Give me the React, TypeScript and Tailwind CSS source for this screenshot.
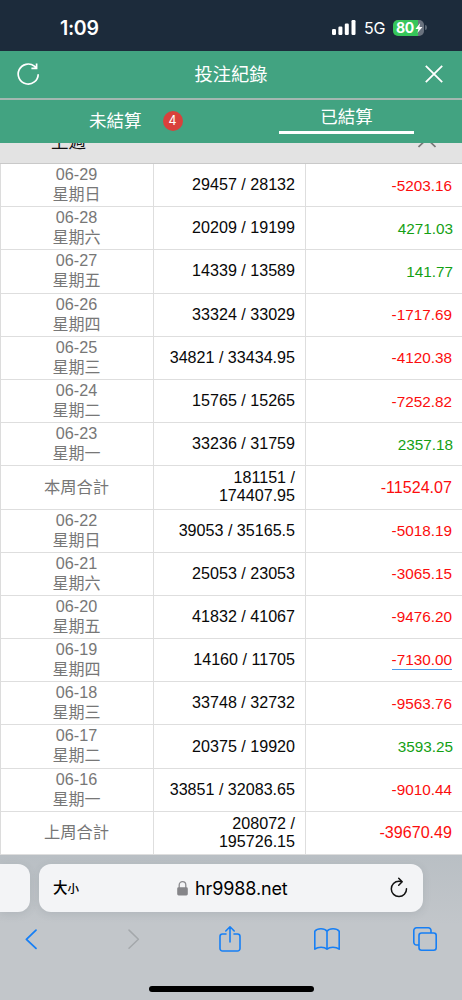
import React from 'react';

type Row = { date?: string; label: string; bet: string; amount: string; underlined?: boolean };

const rows: Row[] = [
  { date: '06-29', label: '星期日', bet: '29457 / 28132', amount: '-5203.16' },
  { date: '06-28', label: '星期六', bet: '20209 / 19199', amount: '4271.03' },
  { date: '06-27', label: '星期五', bet: '14339 / 13589', amount: '141.77' },
  { date: '06-26', label: '星期四', bet: '33324 / 33029', amount: '-1717.69' },
  { date: '06-25', label: '星期三', bet: '34821 / 33434.95', amount: '-4120.38' },
  { date: '06-24', label: '星期二', bet: '15765 / 15265', amount: '-7252.82' },
  { date: '06-23', label: '星期一', bet: '33236 / 31759', amount: '2357.18' },
  { label: '本周合計', bet: '181151 / 174407.95', amount: '-11524.07' },
  { date: '06-22', label: '星期日', bet: '39053 / 35165.5', amount: '-5018.19' },
  { date: '06-21', label: '星期六', bet: '25053 / 23053', amount: '-3065.15' },
  { date: '06-20', label: '星期五', bet: '41832 / 41067', amount: '-9476.20' },
  { date: '06-19', label: '星期四', bet: '14160 / 11705', amount: '-7130.00', underlined: true },
  { date: '06-18', label: '星期三', bet: '33748 / 32732', amount: '-9563.76' },
  { date: '06-17', label: '星期二', bet: '20375 / 19920', amount: '3593.25' },
  { date: '06-16', label: '星期一', bet: '33851 / 32083.65', amount: '-9010.44' },
  { label: '上周合計', bet: '208072 / 195726.15', amount: '-39670.49' },
];

function StatusBar() {
  return (
    <div className="flex h-[51px] shrink-0 items-start justify-between bg-[#1c2b3b] font-['Inter','Liberation_Sans',sans-serif] text-white">
      <span className="ml-[60px] mt-[16px] text-[19.5px] font-semibold leading-[24px] tracking-[-0.3px]">1:09</span>
      <div className="mr-[35px] mt-[19px] flex h-[17px] items-center">
        <svg width="24" height="15" viewBox="0 0 24 15" fill="white" className="mr-[8px]">
          <rect x="0" y="9" width="4" height="6" rx="1.2" />
          <rect x="6.4" y="6.5" width="4" height="8.5" rx="1.2" />
          <rect x="12.8" y="3.5" width="4" height="11.5" rx="1.2" />
          <rect x="19.5" y="0" width="4" height="15" rx="1.2" />
        </svg>
        <span className="mr-[8px] w-[21px] pt-[2px] text-[16px] leading-[17px] tracking-[-0.2px]">5G</span>
        <div className="flex h-[16px] w-[31px] items-center overflow-hidden rounded-[5px] bg-[linear-gradient(90deg,#36c65a_82%,#69727e_82%)] pl-[3px]">
          <span className="text-[14px] font-bold leading-[16px] tracking-[-0.3px]">80</span>
          <svg width="8" height="12" viewBox="0 0 9 12" className="ml-px shrink-0">
            <path d="M5.8 0.5 0.5 7h3.3L2.7 11.5 8.4 5H5L5.8 0.5z" fill="white" />
          </svg>
        </div>
        <span className="ml-px h-[5px] w-[2px] rounded-r-full bg-[#5a6672]" />
      </div>
    </div>
  );
}

function Header() {
  return (
    <header className="grid h-[47px] shrink-0 grid-cols-[1fr_auto_1fr] items-center bg-[#42a381] text-white">
      <svg width="24" height="24" viewBox="0 0 24 24" fill="none" stroke="white" strokeWidth="1.7" className="mb-[2px] ml-[17px]">
        <path d="M21.2 12.2A10 10 0 1 1 17.4 4.2L20 6.3M14.4 6.3h5.2V1.4" />
      </svg>
      <h1 className="text-[18.3px] leading-[24px]">投注紀錄</h1>
      <svg width="20" height="20" viewBox="0 0 20 20" fill="none" stroke="white" strokeWidth="1.8" className="mb-px mr-[18px] justify-self-end">
        <path d="m1.8 1.8 16.4 16.4M18.2 1.8 1.8 18.2" />
      </svg>
    </header>
  );
}

function Tabs() {
  return (
    <nav className="flex h-[45px] shrink-0 border-t-2 border-[#a3b8b1] bg-[#42a381] text-[17.5px] text-white">
      <div className="flex w-[231px] items-center pb-[2px] pl-[89px]">
        <span className="leading-[24px]">未結算</span>
        <span className="ml-[21px] flex size-[20px] items-center justify-center rounded-full bg-[#d9413c] pt-px font-['Inter',sans-serif] text-[12.5px] leading-none">4</span>
      </div>
      <div className="flex w-[231px] flex-col items-center">
        <span className="mt-[5px] leading-[24px]">已結算</span>
        <span className="mt-[2px] h-[3px] w-[135px] bg-white" />
      </div>
    </nav>
  );
}

function SectionBar() {
  return (
    <div className="flex h-[21px] shrink-0 items-end overflow-hidden border-b border-[#c9c9c9] bg-[#e3e3e3] text-[17.5px] leading-[26px] text-[#111]">
      <span className="mb-[8px] ml-[51px]">上週</span>
      <svg width="18" height="12" viewBox="0 0 18 12" fill="none" stroke="#777" strokeWidth="1.7" className="mb-[15px] ml-auto mr-[26px]">
        <path d="m0.5 11 8.5-8.2 8.5 8.2" />
      </svg>
    </div>
  );
}

function RecordTable() {
  return (
    <main className="flex h-[691px] shrink-0 flex-col border-l border-[#dcdcdc] bg-white">
      {rows.map((row) => (
        <div key={row.date ?? row.label} className="grid min-h-0 flex-1 grid-cols-[152px_152px_1fr] border-b border-[#dedede]">
          <div className={`flex flex-col items-center pr-[1px] text-[#777] ${row.date ? 'text-[16px]' : 'justify-center pb-px text-[16.3px]'}`}>
            {row.date && <span className="pt-px text-[16.2px] leading-[18px]">{row.date}</span>}
            <span className={row.date ? 'leading-[23px]' : 'leading-[24px]'}>{row.label}</span>
          </div>
          <div className="flex items-center justify-end border-l border-[#dedede] pb-[2px] pl-[10px] pr-[10px] text-right text-[16.1px] leading-[18px] text-[#080808]">
            <span className={row.date ? 'whitespace-nowrap' : 'w-[90px]'}>{row.bet}</span>
          </div>
          <div className={`flex items-center justify-end border-l border-[#dedede] ${row.amount.startsWith('-') ? 'pr-[10px] text-[#fc0d0d]' : 'pr-[9px] text-[#14a014]'} ${row.date ? 'pt-px text-[15.3px]' : 'pb-px text-[16.1px]'}`}>
            <span className={`leading-[18px] ${row.underlined ? 'border-b border-[#4c9ceb]' : ''}`}>{row.amount}</span>
          </div>
        </div>
      ))}
    </main>
  );
}

function BrowserBar() {
  return (
    <footer className="flex min-h-0 flex-1 flex-col bg-[linear-gradient(180deg,#b9bfc4,#c2c6ca_70px)]">
      <div className="mt-[9px] flex h-[48px] shrink-0 gap-[9px] text-black">
        <div className="w-[30px] rounded-r-[12px] bg-[#f3f4f6] shadow-[0_2px_8px_rgba(60,70,80,0.12)]" />
        <div className="flex w-[384px] items-center rounded-[12px] bg-[#f3f4f6] shadow-[0_2px_8px_rgba(60,70,80,0.12)]">
          <div className="ml-[14px] flex w-[124px] items-baseline font-medium leading-[24px]">
            <span className="text-[14.5px]">大</span><span className="text-[11.5px]">小</span>
          </div>
          <svg width="11" height="15" viewBox="0 0 11 15" fill="none">
            <path d="M2.2 7V4a3.3 3.3 0 0 1 6.6 0v3" stroke="#8b8b8f" strokeWidth="1.3" />
            <rect x="0.2" y="6.3" width="10.6" height="8.2" rx="1.4" fill="#858589" />
          </svg>
          <span className="ml-[7px] mt-px font-['Inter',sans-serif] text-[18px] leading-[24px] tracking-[-0.12px]">hr9988.net</span>
          <svg width="18" height="21" viewBox="0 0 18 21" fill="none" stroke="#111" strokeWidth="1.5" strokeLinecap="round" strokeLinejoin="round" className="mb-[2px] ml-auto mr-[15px]">
            <path d="M16.5 11.7A7.6 7.6 0 1 1 8.9 4.3c1.2 0 2 .1 3 .4M8.7 1.2l3.5 3.6-3.5 3.4" />
          </svg>
        </div>
      </div>
      <div className="mt-[12px] flex h-[30px] shrink-0 items-center justify-between px-[24px] text-[#167ff5]">
        <svg width="14" height="22" viewBox="0 0 14 22" fill="none" stroke="currentColor" strokeWidth="1.8" strokeLinecap="round" strokeLinejoin="round"><path d="m12 2.1-9.6 9.2L12 20.3" /></svg>
        <svg width="14" height="22" viewBox="0 0 14 22" fill="none" stroke="#a4a8ab" strokeWidth="1.5" strokeLinecap="round" strokeLinejoin="round" className="ml-[18px]"><path d="m2 2.1 9.4 9.2L2 20.3" /></svg>
        <svg width="24" height="29" viewBox="0 0 24 29" fill="none" stroke="currentColor" strokeWidth="1.6" strokeLinecap="round" strokeLinejoin="round" className="ml-[6px]">
          <path d="M8 9H4.5A2.5 2.5 0 0 0 2 11.5v12A2.5 2.5 0 0 0 4.5 26h15a2.5 2.5 0 0 0 2.5-2.5v-12A2.5 2.5 0 0 0 19.5 9H16M12 17V1.8M7.8 6 12 1.8 16.2 6" />
        </svg>
        <svg width="28" height="24" viewBox="0 0 28 24" fill="none" stroke="currentColor" strokeWidth="1.6" strokeLinejoin="round">
          <path d="M14 4.2C11.5.9 4.4.9 1.8 4.2v18c3.2-2.6 9.6-2.6 12.2 0 2.6-2.6 9-2.6 12.2 0v-18C23.6.9 16.5.9 14 4.2zM14 4.2v18" />
        </svg>
        <svg width="26" height="26" viewBox="0 0 26 26" fill="none" stroke="currentColor" strokeWidth="1.6">
          <path d="M7 19H4.5A2.7 2.7 0 0 1 1.8 16.3V4.5a2.7 2.7 0 0 1 2.7-2.7h11.8A2.7 2.7 0 0 1 19 4.5V7" />
          <rect x="7" y="7" width="17.2" height="17.2" rx="2.5" />
        </svg>
      </div>
      <div className="mb-[8px] mt-auto h-[6px] w-[165px] self-center rounded-full bg-black" />
    </footer>
  );
}

export default function App() {
  return (
    <div className="flex h-[1000px] w-[462px] flex-col overflow-hidden bg-white font-['Liberation_Sans','Noto_Sans_CJK_TC',sans-serif]">
      <StatusBar />
      <Header />
      <Tabs />
      <SectionBar />
      <RecordTable />
      <BrowserBar />
    </div>
  );
}
